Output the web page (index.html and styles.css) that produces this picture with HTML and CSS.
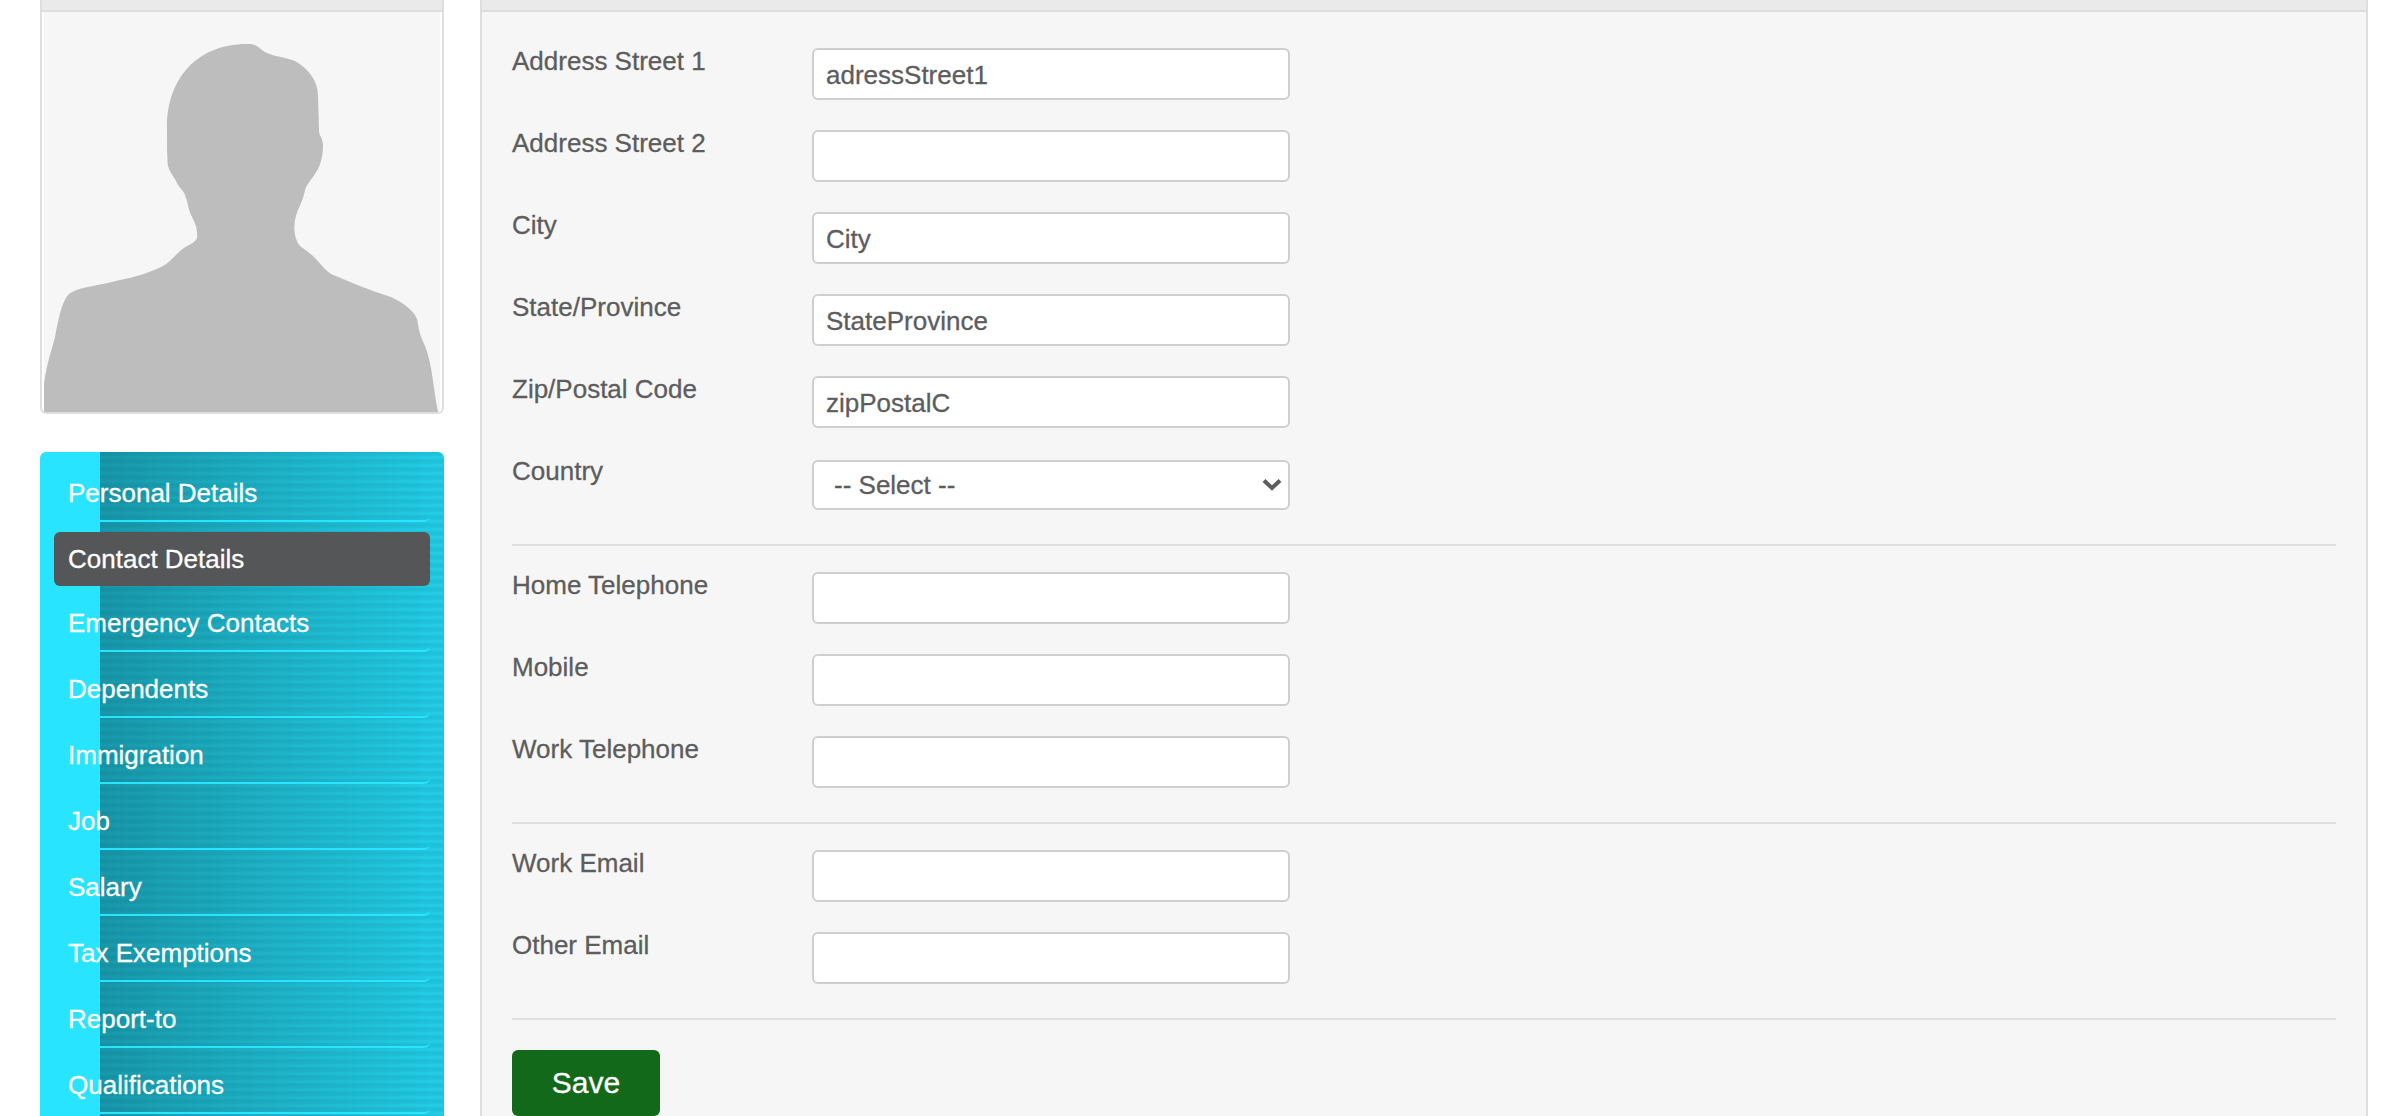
FILE: index.html
```html
<!DOCTYPE html>
<html lang="en">
<head>
<meta charset="utf-8">
<title>Contact Details</title>
<link rel="stylesheet" href="styles.css">
</head>
<body>
<div class="page">
  <aside class="sidebar">
    <div class="photo">
      <div class="panel-head"></div>
      <svg class="avatar" viewBox="42 12 400 400" aria-label="Profile photo">
        <rect x="44" y="12" width="396" height="400" fill="#f6f6f6"/>
        <path fill="#bdbdbd" d="M44 412V384C47 362 51 353 55 337C59 316 62 301 69 294C78 287 98 286 120 280C136 277 151 272 163 266C172 261 177 252 187 246C193 243 196 241 197 238C198 227 194 221 190 213C188 206 187 200 185 195C183 190 180 188 178 185C175 178 170 173 168 166C167 158 167 142 167 127C167 82 194 44 247 44C258 43 260 50 267 53C276 57 285 57 295 61C309 69 318 81 318 96L319 130C319 137 323 137 323 146C323 159 319 168 315 174C311 180 307 184 305 190C303 202 297 209 295 220C293 232 296 241 300 246C305 250 309 252 314 257C320 263 325 270 331 274C352 283 372 291 391 297C404 303 418 313 418 324C420 339 425 343 428 355C433 373 434 393 438 412Z"/>
      </svg>
    </div>
    <nav class="menu">
      <a class="item">Personal Details</a>
      <a class="item selected">Contact Details</a>
      <a class="item">Emergency Contacts</a>
      <a class="item">Dependents</a>
      <a class="item">Immigration</a>
      <a class="item">Job</a>
      <a class="item">Salary</a>
      <a class="item">Tax Exemptions</a>
      <a class="item">Report-to</a>
      <a class="item">Qualifications</a>
    </nav>
  </aside>
  <main class="panel">
    <div class="panel-head"></div>
    <form class="form">
      <div class="group">
        <div class="row"><label>Address Street 1</label><input type="text" value="adressStreet1"></div>
        <div class="row"><label>Address Street 2</label><input type="text"></div>
        <div class="row"><label>City</label><input type="text" value="City"></div>
        <div class="row"><label>State/Province</label><input type="text" value="StateProvince"></div>
        <div class="row"><label>Zip/Postal Code</label><input type="text" value="zipPostalC"></div>
        <div class="row"><label>Country</label>
          <div class="select"><span>-- Select --</span>
            <svg width="20" height="14" viewBox="0 0 20 14"><path d="M2 2.5L10 10L18 2.5" fill="none" stroke="#5d5d5d" stroke-width="4"/></svg>
          </div>
        </div>
      </div>
      <div class="group">
        <div class="row"><label>Home Telephone</label><input type="text"></div>
        <div class="row"><label>Mobile</label><input type="text"></div>
        <div class="row"><label>Work Telephone</label><input type="text"></div>
      </div>
      <div class="group">
        <div class="row"><label>Work Email</label><input type="text"></div>
        <div class="row"><label>Other Email</label><input type="text"></div>
      </div>
      <button class="save" type="button">Save</button>
    </form>
  </main>
</div>
</body>
</html>
```
FILE: styles.css
```css
* { box-sizing: border-box; }
body {
  margin: 0;
  background: #fff;
  color: #5d5d5d;
  font: 26px/30px "Liberation Sans", Arial, sans-serif;
  -webkit-text-stroke: .3px;
}
.page {
  display: flex;
  gap: 36px;
  height: 1116px;
  padding: 0 32px 0 40px;
  overflow: hidden;
}
.sidebar { flex: none; width: 404px; }
.panel-head {
  height: 12px;
  background: #eaeaea;
  border-bottom: 2px solid #dedede;
}
.photo {
  height: 414px;
  border: 2px solid #dedede;
  border-top: 0;
  border-radius: 0 0 6px 6px;
  overflow: hidden;
}
.avatar { display: block; width: 400px; height: 400px; }
.menu {
  display: flex;
  flex-direction: column;
  gap: 12px;
  height: 700px;
  margin-top: 38px;
  padding: 16px 14px;
  border-radius: 6px 6px 0 0;
  background:
    linear-gradient(#28e4ff, #28e4ff) 0 0 / 60px 100% no-repeat,
    repeating-linear-gradient(rgba(0, 60, 80, .09) 0 2px, rgba(0, 60, 80, .04) 4px, rgba(0, 60, 80, 0) 5px 6px, rgba(0, 60, 80, .09) 8px),
    linear-gradient(90deg, #1898aa 60px, #1cacc0 180px, #22cfe8 404px);
}
.item {
  flex: none;
  height: 54px;
  padding: 10px 14px 0;
  border-bottom: 2px solid #28e4ff;
  border-radius: 6px;
  color: #fff;
}
.item.selected {
  margin-top: -2px;
  border: 0;
  background: #555658;
  padding-top: 12px;
}
.panel {
  flex: 1;
  background: #f6f6f6;
  border: 2px solid #dedede;
  border-width: 0 2px;
}
.form { padding: 36px 30px 0; }
.group {
  display: flex;
  flex-direction: column;
  gap: 30px;
  padding-bottom: 34px;
  margin-bottom: 26px;
  border-bottom: 2px solid #dedede;
}
.group:last-of-type { margin-bottom: 30px; }
.row { display: flex; height: 52px; }
.row label { width: 300px; margin-top: -2px; }
.row input, .select {
  width: 478px;
  height: 52px;
  border: 2px solid #cfcfcf;
  border-radius: 6px;
  background: #fff;
  color: #5d5d5d;
  font: inherit;
}
.row input { padding: 2px 12px 0; outline: 0; }
.select {
  display: flex;
  align-items: center;
  justify-content: space-between;
  height: 50px;
  margin-top: 2px;
  padding: 0 6px 0 20px;
}
.save {
  display: block;
  width: 148px;
  height: 66px;
  padding: 0;
  border: 0;
  border-radius: 6px;
  background: #13691a;
  color: #fff;
  font: 30px/34px "Liberation Sans", Arial, sans-serif;
}
```
